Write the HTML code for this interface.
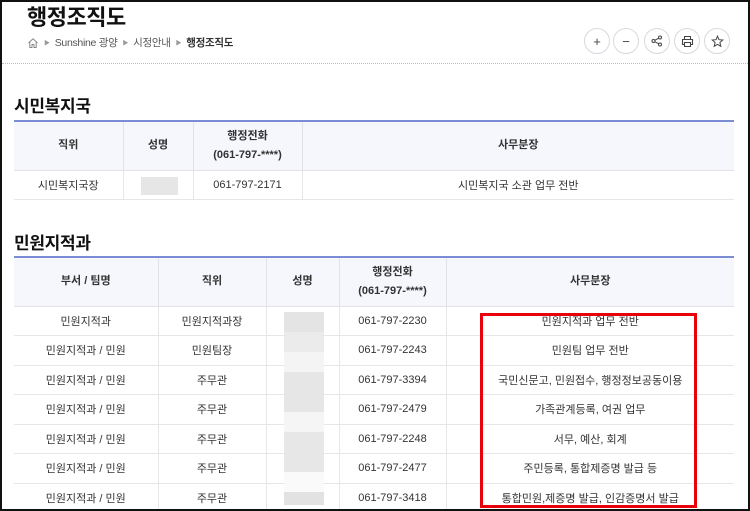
<!DOCTYPE html>
<html><head><meta charset="utf-8"><style>
*{margin:0;padding:0;box-sizing:border-box}
html,body{width:750px;height:511px;overflow:hidden;background:#fff}
body{font-family:"Liberation Sans","Noto Sans CJK KR",sans-serif;color:#222;position:relative}
.frame{position:absolute;left:0;top:0;width:750px;height:511px;border:2px solid #111;pointer-events:none;z-index:10}
.abs{position:absolute}
h1{position:absolute;left:27px;top:0px;font-size:22px;font-weight:bold;color:#111;letter-spacing:-0.5px}
.bc{position:absolute;left:27px;top:35px;font-size:10.5px;color:#555;display:flex;align-items:center;gap:5px;letter-spacing:-0.3px}
.bc .ar{font-size:6px;color:#999}
.dot{position:absolute;left:2px;right:2px;top:63px;border-top:1px dotted #bbb}
.btn{position:absolute;top:28px;width:26px;height:26px;border:1px solid #d8d8e0;border-radius:50%;display:flex;align-items:center;justify-content:center;color:#444;font-size:13px}
h2{position:absolute;left:14px;font-size:17px;font-weight:bold;color:#111;letter-spacing:-0.3px}
table{position:absolute;left:14px;width:720px;border-collapse:collapse;table-layout:fixed;border-top:2px solid #7b8bd6}
th{background:#f5f7fd;font-size:11px;font-weight:bold;color:#333;border:1px solid #e3e3e6;border-top:none;line-height:19px}
td{font-size:11px;color:#333;text-align:center;border:1px solid #e6e6e8;height:29.5px;padding:0}
th:first-child,td:first-child{border-left:none}
th:last-child,td:last-child{border-right:none}
.ph{position:absolute;background:#e6e6e6}
</style></head><body>
<div class="frame"></div>
<h1>행정조직도</h1>
<div class="bc"><svg width="12" height="12" viewBox="0 0 12 12"><path d="M1.5 6 L6 1.8 L10.5 6 M2.8 5 V10.5 H5 V7.5 H7 V10.5 H9.2 V5" fill="none" stroke="#888" stroke-width="1"/></svg><span class="ar">▶</span><span>Sunshine 광양</span><span class="ar">▶</span><span>시정안내</span><span class="ar">▶</span><span style="color:#333;font-weight:bold">행정조직도</span></div>
<div class="btn" style="left:584px">+</div>
<div class="btn" style="left:613px">−</div>
<div class="btn" style="left:644px"><svg width="12" height="12" viewBox="0 0 12 12" fill="none" stroke="#444" stroke-width="1"><circle cx="9" cy="2.5" r="1.5"/><circle cx="2.5" cy="6" r="1.5"/><circle cx="9" cy="9.5" r="1.5"/><path d="M3.8 5.3 L7.7 3.2 M3.8 6.7 L7.7 8.8"/></svg></div>
<div class="btn" style="left:674px"><svg width="13" height="13" viewBox="0 0 13 13" fill="none" stroke="#444" stroke-width="1.1"><path d="M3.5 4.5 V1.5 H9.5 V4.5 M3.5 9.5 H1.5 V4.5 H11.5 V9.5 H9.5 M3.5 7.5 H9.5 V11.5 H3.5 Z"/></svg></div>
<div class="btn" style="left:704px"><svg width="13" height="13" viewBox="0 0 13 13" fill="none" stroke="#444" stroke-width="1"><path d="M6.5 1.2 L8 4.7 L11.8 5 L8.9 7.5 L9.8 11.3 L6.5 9.3 L3.2 11.3 L4.1 7.5 L1.2 5 L5 4.7 Z"/></svg></div>
<div class="dot"></div>

<h2 style="top:92px">시민복지국</h2>
<table style="top:120px">
<colgroup><col style="width:109px"><col style="width:70px"><col style="width:109px"><col></colgroup>
<tr style="height:49px"><th>직위</th><th>성명</th><th>행정전화<br>(061-797-****)</th><th>사무분장</th></tr>
<tr><td>시민복지국장</td><td></td><td>061-797-2171</td><td>시민복지국 소관 업무 전반</td></tr>
</table>
<div class="ph" style="left:141px;top:177px;width:37px;height:18px"></div>

<h2 style="top:229px">민원지적과</h2>
<table style="top:256px">
<colgroup><col style="width:144px"><col style="width:108px"><col style="width:73px"><col style="width:107px"><col></colgroup>
<tr style="height:49px"><th>부서 / 팀명</th><th>직위</th><th>성명</th><th>행정전화<br>(061-797-****)</th><th>사무분장</th></tr>
<tr><td>민원지적과</td><td>민원지적과장</td><td></td><td>061-797-2230</td><td>민원지적과 업무 전반</td></tr>
<tr><td>민원지적과 / 민원</td><td>민원팀장</td><td></td><td>061-797-2243</td><td>민원팀 업무 전반</td></tr>
<tr><td>민원지적과 / 민원</td><td>주무관</td><td></td><td>061-797-3394</td><td>국민신문고, 민원접수, 행정정보공동이용</td></tr>
<tr><td>민원지적과 / 민원</td><td>주무관</td><td></td><td>061-797-2479</td><td>가족관계등록, 여권 업무</td></tr>
<tr><td>민원지적과 / 민원</td><td>주무관</td><td></td><td>061-797-2248</td><td>서무, 예산, 회계</td></tr>
<tr><td>민원지적과 / 민원</td><td>주무관</td><td></td><td>061-797-2477</td><td>주민등록, 통합제증명 발급 등</td></tr>
<tr><td>민원지적과 / 민원</td><td>주무관</td><td></td><td>061-797-3418</td><td>통합민원,제증명 발급, 인감증명서 발급</td></tr>
</table>
<div class="ph" style="left:284px;top:312px;width:40px;height:20px;background:#e4e4e4"></div>
<div class="ph" style="left:284px;top:332px;width:40px;height:20px;background:#ebebeb"></div>
<div class="ph" style="left:284px;top:352px;width:40px;height:20px;background:#f4f4f4"></div>
<div class="ph" style="left:284px;top:372px;width:40px;height:40px;background:#e6e6e6"></div>
<div class="ph" style="left:284px;top:412px;width:40px;height:20px;background:#f5f5f5"></div>
<div class="ph" style="left:284px;top:432px;width:40px;height:40px;background:#e7e7e7"></div>
<div class="ph" style="left:284px;top:472px;width:40px;height:20px;background:#fafafa"></div>
<div class="ph" style="left:284px;top:492px;width:40px;height:13px;background:#e2e2e2"></div>
<div class="abs" style="left:480px;top:313px;width:217px;height:195px;border:3px solid #e8000b;z-index:5"></div>
</body></html>
